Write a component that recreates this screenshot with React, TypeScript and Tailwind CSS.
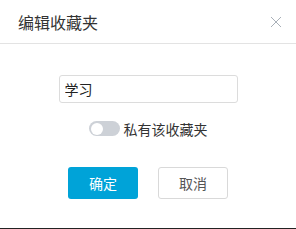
import React, { useState } from 'react';

export default function App() {
  const [name, setName] = useState('学习');
  const [isPrivate, setIsPrivate] = useState(false);

  return (
    <div
      className="w-[296px] h-[229px] bg-white flex flex-col overflow-hidden"
      style={{ fontFamily: '"Noto Sans CJK SC", "Noto Sans", sans-serif' }}
    >
      {/* Header */}
      <div className="h-[44px] shrink-0 flex items-center justify-between pl-[18px] pr-[14px] border-b border-[#e3e3e3]">
        <h2 className="text-[16px] leading-none text-[#333]">编辑收藏夹</h2>
        <button className="w-[12px] h-[12px] flex items-center justify-center text-[#a9b0b8]">
          <svg width="12" height="12" viewBox="0 0 12 12" fill="none" stroke="currentColor" strokeWidth="1">
            <path d="M1 1 L11 11 M11 1 L1 11" />
          </svg>
        </button>
      </div>

      {/* Body */}
      <div className="flex-1 flex flex-col items-center pt-[31px]">
        <input
          value={name}
          onChange={(e) => setName(e.target.value)}
          className="w-[179px] h-[28px] px-[5px] border border-[#dcdcdc] rounded-[3px] text-[14px] text-[#222] outline-none"
        />

        <div className="mt-[18px] flex items-center gap-[4px]">
          <button
            onClick={() => setIsPrivate(!isPrivate)}
            className={`w-[31px] h-[15px] rounded-full flex items-center px-[2px] ${isPrivate ? 'bg-[#00a2d8] justify-end' : 'bg-[#cdd1d7] justify-start'}`}
          >
            <span className="w-[12px] h-[12px] rounded-full bg-white" />
          </button>
          <span className="text-[14px] leading-none text-[#333]">私有该收藏夹</span>
        </div>

        <div className="mt-[31px] flex gap-[20px]">
          <button className="w-[70px] h-[32px] rounded-[3px] bg-[#00a3d8] text-white text-[14px]">确定</button>
          <button className="w-[70px] h-[32px] rounded-[3px] border border-[#d9d9d9] bg-white text-[#555] text-[14px]">取消</button>
        </div>
      </div>

      <div className="h-[1px] shrink-0 bg-[#222]" />
    </div>
  );
}
